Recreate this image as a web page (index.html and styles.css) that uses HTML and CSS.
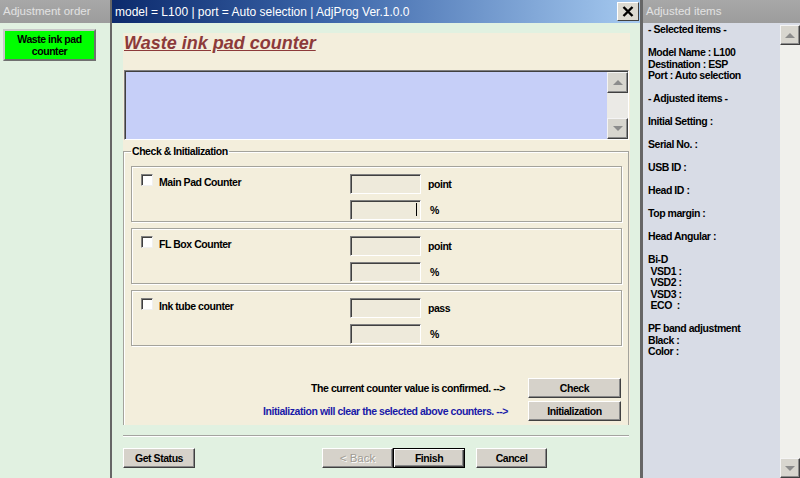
FILE: index.html
```html
<!DOCTYPE html>
<html lang="en">
<head>
<meta charset="UTF-8">
<meta name="viewport" content="width=device-width, initial-scale=1.0">
<title>AdjProg - Waste ink pad counter</title>
<link rel="stylesheet" href="styles.css">
</head>
<body>
<aside class="pane pane-order">
    <div class="pane-head">Adjustment order</div>
    <div class="order-list">
        <a href="#" class="order-item">Waste ink pad<br>counter</a>
    </div>
</aside>

<section class="window">
    <div class="titlebar">
        <span class="title-text">model = L100 | port = Auto selection | AdjProg Ver.1.0.0</span>
        <a href="#" class="close-btn">
            <svg width="12" height="11" viewBox="0 0 12 11"><path d="M1.5 1 L10.5 10 M10.5 1 L1.5 10" stroke="#000" stroke-width="2.4" fill="none"/></svg>
        </a>
    </div>
    <div class="window-body">
        <div class="sheet">
            <h1 class="sheet-title">Waste ink pad counter</h1>
            <div class="memo">
                <div class="memo-text"></div>
                <div class="scrollbar">
                    <span class="sb-btn sb-up"></span>
                    <span class="sb-track"></span>
                    <span class="sb-btn sb-down"></span>
                </div>
            </div>
            <fieldset class="group">
                <legend>Check &amp; Initialization</legend>
                <div class="counter">
                    <label class="counter-name"><input type="checkbox" class="check">Main Pad Counter</label>
                    <div class="counter-fields">
                        <span class="field"></span><span class="unit">point</span>
                        <span class="field"><i class="caret"></i></span><span class="unit unit-pct">%</span>
                    </div>
                </div>
                <div class="counter">
                    <label class="counter-name"><input type="checkbox" class="check">FL Box Counter</label>
                    <div class="counter-fields">
                        <span class="field"></span><span class="unit">point</span>
                        <span class="field"></span><span class="unit unit-pct">%</span>
                    </div>
                </div>
                <div class="counter">
                    <label class="counter-name"><input type="checkbox" class="check">Ink tube counter</label>
                    <div class="counter-fields">
                        <span class="field"></span><span class="unit">pass</span>
                        <span class="field"></span><span class="unit unit-pct">%</span>
                    </div>
                </div>
                <div class="action-row">
                    <span class="hint">The current counter value is confirmed. --&gt;</span>
                    <a href="#" class="btn btn-wide">Check</a>
                </div>
                <div class="action-row action-init">
                    <span class="hint hint-blue">Initialization will clear the selected above counters. --&gt;</span>
                    <a href="#" class="btn btn-wide">Initialization</a>
                </div>
            </fieldset>
        </div>
        <div class="rule"></div>
        <div class="wizard">
            <a href="#" class="btn btn-status">Get Status</a>
            <a href="#" class="btn btn-back disabled">&lt; Back</a>
            <a href="#" class="btn btn-finish">Finish</a>
            <a href="#" class="btn btn-cancel">Cancel</a>
        </div>
    </div>
</section>

<aside class="pane pane-result">
    <div class="pane-head">Adjusted items</div>
    <div class="result">
<pre class="result-text">- Selected items -

Model Name : L100
Destination : ESP
Port : Auto selection

- Adjusted items -

Initial Setting :

Serial No. :

USB ID :

Head ID :

Top margin :

Head Angular :

Bi-D
 VSD1 :
 VSD2 :
 VSD3 :
 ECO  :

PF band adjustment
Black :
Color :</pre>
        <div class="scrollbar scrollbar-result">
            <span class="sb-btn sb-up"></span>
            <span class="sb-track"></span>
            <span class="sb-btn sb-down"></span>
        </div>
    </div>
</aside>
</body>
</html>
```

FILE: styles.css
```css
* {
    box-sizing: border-box;
}
body {
    margin: 0;
    width: 800px;
    height: 478px;
    display: flex;
    overflow: hidden;
    font-family: "Liberation Sans", Arial, sans-serif;
    font-size: 10.5px;
    font-weight: bold;
    letter-spacing: -0.45px;
    color: #000;
    background: #e1f1e1;
}
a {
    color: inherit;
    text-decoration: none;
}

/* side panes */
.pane {
    display: flex;
    flex-direction: column;
}
.pane-head {
    height: 23px;
    line-height: 23px;
    padding-left: 3px;
    background: linear-gradient(#a8a8a8, #9c9c9c);
    color: #e2e2e2;
    font-size: 11.5px;
    font-weight: normal;
    letter-spacing: 0;
    white-space: nowrap;
}
.pane-order {
    width: 112px;
    background: #e1f1e1;
    border-right: 2px solid #666;
}
.order-list {
    padding: 6px 0 0 3px;
}
.order-item {
    display: block;
    width: 93px;
    height: 32px;
    padding-top: 2px;
    background: #00ff00;
    border: 2px solid;
    border-color: #c8c8c8 #707070 #707070 #c8c8c8;
    text-align: center;
    line-height: 12px;
}
.pane-result {
    width: 160px;
    background: #d8dce6;
    border-left: 3px solid #666;
}
.result {
    flex: 1;
    display: flex;
    min-height: 0;
}
.result-text {
    flex: 1;
    margin: 0;
    padding: 1px 0 0 5px;
    font: inherit;
    line-height: 11.5px;
    white-space: pre;
}

/* main window */
.window {
    width: 528px;
    display: flex;
    flex-direction: column;
}
.titlebar {
    height: 23px;
    display: flex;
    align-items: center;
    padding: 0 1px 0 3px;
    background: linear-gradient(to right, #0c2a6c, #3a64a8 40%, #a6caf0);
    color: #fff;
    font-size: 12px;
    font-weight: normal;
    letter-spacing: 0;
    white-space: nowrap;
}
.close-btn {
    margin-left: auto;
    width: 22px;
    height: 19px;
    display: flex;
    align-items: center;
    justify-content: center;
    background: #dcdad2;
    border: 1px solid;
    border-color: #fff #404040 #404040 #fff;
}
.window-body {
    flex: 1;
    padding: 10px 10px 0 11px;
    background: #e1f1e1;
}
.sheet {
    height: 392px;
    background: #f3eedc;
    overflow: hidden;
}
.sheet-title {
    margin: 0;
    height: 37px;
    padding-left: 1px;
    font-size: 18px;
    font-style: italic;
    line-height: 20px;
    letter-spacing: 0;
    color: #8c3a3a;
    text-decoration: underline;
}

/* memo box with its scrollbar */
.memo {
    height: 70px;
    margin: 0 1px;
    display: flex;
    background: #c6cff8;
    border: 1px solid;
    border-color: #808080 #fff #fff #808080;
    box-shadow: inset 1px 1px #404040;
    padding: 1px 0 0 1px;
}
.memo-text {
    flex: 1;
}
.scrollbar {
    width: 21px;
    display: flex;
    flex-direction: column;
}
.sb-btn {
    height: 21px;
    display: flex;
    align-items: center;
    justify-content: center;
    background: #d8d6cf;
    border: 1px solid;
    border-color: #f4f4f4 #404040 #404040 #f4f4f4;
    box-shadow: inset -1px -1px #8c8c8c;
}
.sb-up::before,
.sb-down::before {
    content: "";
    border-left: 5px solid transparent;
    border-right: 5px solid transparent;
}
.sb-up::before {
    border-bottom: 5px solid #8c8c8c;
}
.sb-down::before {
    border-top: 5px solid #8c8c8c;
}
.sb-track {
    flex: 1;
    background: #ebeae6;
}
.scrollbar-result {
    width: 20px;
    margin-top: 2px;
}
.scrollbar-result .sb-btn {
    height: 20px;
}
.scrollbar-result .sb-track {
    background: #f0f0ec;
}

/* check & initialization group */
.group {
    margin: 5px 1px 0 0;
    padding: 0 6px 10px 7px;
    min-width: 0;
    border: 1px solid #a4a39c;
    box-shadow: inset 1px 1px #fff;
}
.group legend {
    padding: 0 1px;
    line-height: 12px;
}
.counter {
    height: 56px;
    margin-top: 9px;
    display: flex;
    padding: 5px 0 0 9px;
    border: 1px solid #a4a39c;
    box-shadow: inset 1px 1px #fff, 1px 1px #fff;
}
.counter + .counter {
    margin-top: 6px;
}
.counter-name {
    width: 209px;
    height: 20px;
    display: flex;
    align-items: center;
    gap: 6px;
}
.check {
    appearance: none;
    width: 12px;
    height: 12px;
    margin: 0 0 4px;
    background: #fff;
    border: 1px solid;
    border-color: #808080 #f0f0f0 #f0f0f0 #808080;
    box-shadow: inset 1px 1px #404040;
}
.counter-fields {
    display: grid;
    grid-template-columns: 71px auto;
    gap: 3px 7px;
    align-items: center;
}
.field {
    height: 20px;
    display: flex;
    align-items: center;
    justify-content: flex-end;
    padding-right: 3px;
    background: #eeeadb;
    border: 1px solid;
    border-color: #808080 #fff #fff #808080;
    box-shadow: inset 1px 1px #404040;
}
.caret {
    width: 1px;
    height: 13px;
    background: #000;
}
.unit-pct {
    padding-left: 2px;
}
.action-row {
    height: 20px;
    margin: 32px 1px 0 0;
    display: flex;
    justify-content: flex-end;
    align-items: center;
    gap: 23px;
}
.action-init {
    margin-top: 3px;
    gap: 20px;
}
.hint-blue {
    color: #1a1aa8;
}

/* buttons */
.btn {
    height: 20px;
    display: flex;
    align-items: center;
    justify-content: center;
    background: #d6d2ca;
    border: 1px solid;
    border-color: #fff #404040 #404040 #fff;
    box-shadow: inset -1px -1px #888;
}
.btn-wide {
    width: 93px;
}
.rule {
    height: 2px;
    margin: 10px 1px 0 0;
    border-top: 1px solid #a4a4a0;
    border-bottom: 1px solid #fff;
}
.wizard {
    margin-top: 11px;
    display: flex;
}
.btn-status {
    width: 72px;
}
.btn-back {
    width: 71px;
    margin-left: 127px;
}
.btn.disabled {
    color: #a09c94;
    font-size: 11.5px;
    font-weight: normal;
    letter-spacing: 0;
    text-shadow: 1px 1px #fff;
}
.btn-finish {
    width: 72px;
    border: 1px solid #000;
    box-shadow: inset 1px 1px #fff, inset -1px -1px #404040, inset -2px -2px #888;
}
.btn-cancel {
    width: 71px;
    margin-left: 11px;
}
```
